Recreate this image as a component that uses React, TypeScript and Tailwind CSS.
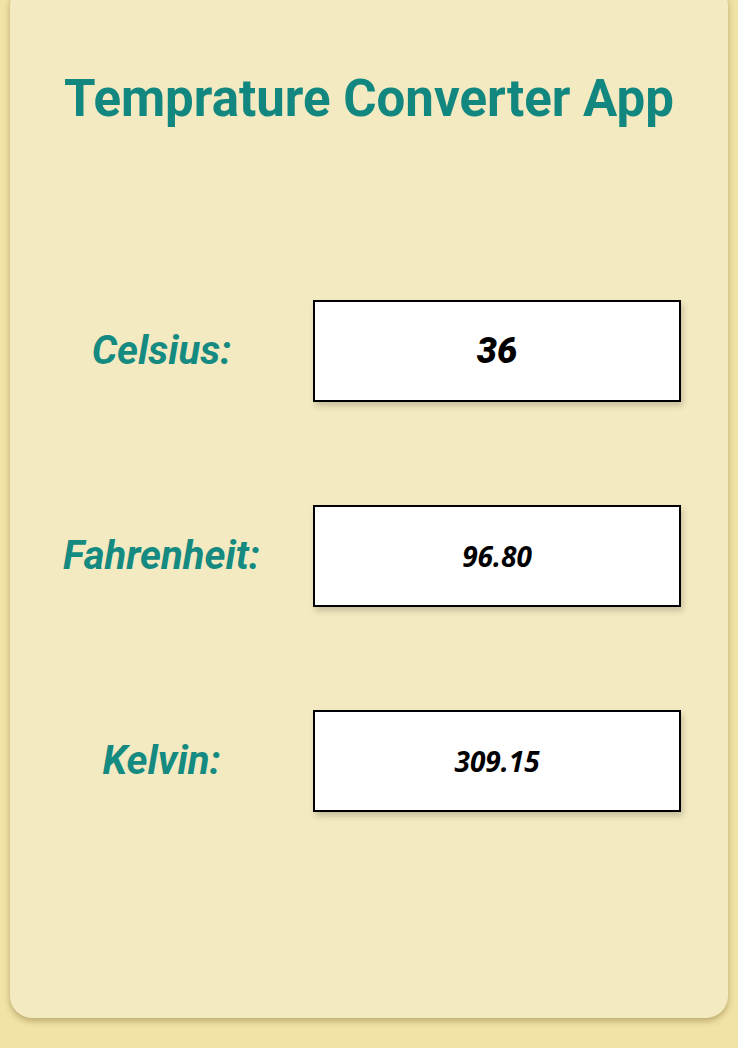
import React from "react";

const rows = [
  { label: "Celsius:", value: "36", big: true },
  { label: "Fahrenheit:", value: "96.80", big: false },
  { label: "Kelvin:", value: "309.15", big: false },
];

export default function App() {
  return (
    <div className="min-h-[1048px] w-full bg-[#f1e2a6] px-[10px] pt-0 overflow-hidden" style={{ fontFamily: "Roboto, sans-serif" }}>
      <div className="-mt-[16px] h-[1034px] rounded-[22px] bg-[#f4eac1] shadow-[0_3px_6px_rgba(120,100,40,0.45)] flex flex-col">
        <h1 className="mt-[85px] text-center text-[51px] font-bold leading-[60px] text-[#12877f]">
          Temprature Converter App
        </h1>
        <div className="mt-[171px] flex flex-col gap-[103px]">
          {rows.map((r) => (
            <div key={r.label} className="flex items-center">
              <div className="w-[303px] text-center text-[40px] font-bold italic text-[#158a81] leading-none">
                {r.label}
              </div>
              <div className="w-[368px] h-[102px] border-2 border-black bg-white flex items-center justify-center shadow-[2px_4px_6px_rgba(0,0,0,0.18)]">
                {r.big ? (
                  <span className="text-[36px] font-black italic text-black leading-none">{r.value}</span>
                ) : (
                  <span
                    className="text-[28px] font-bold italic text-black leading-none"
                    style={{ fontFamily: "'Open Sans', sans-serif" }}
                  >
                    {r.value}
                  </span>
                )}
              </div>
            </div>
          ))}
        </div>
      </div>
    </div>
  );
}
